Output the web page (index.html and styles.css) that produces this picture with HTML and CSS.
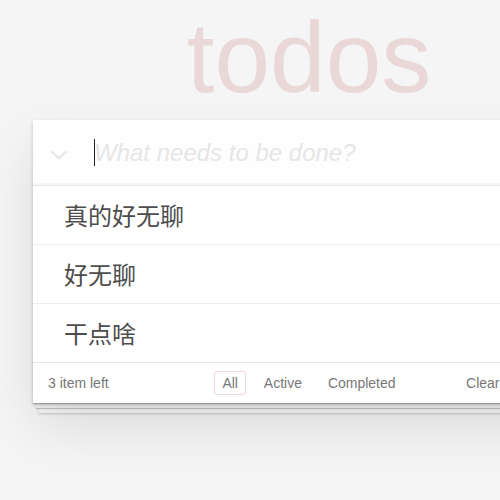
FILE: index.html
```html
<!DOCTYPE html>
<html>
<head>
<meta charset="utf-8">
<link rel="stylesheet" href="styles.css">
</head>
<body>
<div class="page">
  <h1 class="title">todos</h1>
  <section class="todoapp">
    <header class="header">
      <span class="toggle-all">
        <svg width="18" height="10" viewBox="0 0 18 10"><polyline points="1.5,1.5 9,8 16.5,1.5" fill="none" stroke="#e6e6e6" stroke-width="2.2"/></svg>
      </span>
      <div class="new-todo"><span class="caret"></span><span class="placeholder">What needs to be done?</span></div>
    </header>
    <ul class="todo-list">
      <li class="todo">真的好无聊</li>
      <li class="todo">好无聊</li>
      <li class="todo">干点啥</li>
    </ul>
    <footer class="footer">
      <span class="todo-count">3 item left</span>
      <ul class="filters">
        <li><a class="filter selected">All</a></li>
        <li><a class="filter">Active</a></li>
        <li><a class="filter">Completed</a></li>
      </ul>
      <span class="clear">Clear completed</span>
    </footer>
  </section>
</div>
</body>
</html>
```
FILE: styles.css
```css
html, body {
  margin: 0;
  padding: 0;
  overflow: hidden;
}
body {
  background: #f5f5f5;
  font: 14px "Liberation Sans", Arial, "Noto Sans CJK SC", sans-serif;
  color: #4d4d4d;
  width: 500px;
  height: 500px;
}
.page {
  padding-left: 33px;
  width: 550px;
}
.title {
  margin: 0;
  height: 120px;
  font-size: 100px;
  font-weight: 100;
  line-height: 115px;
  text-align: center;
  color: rgba(175, 47, 47, 0.15);
  padding-left: 2px;
}
.todoapp {
  position: relative;
  width: 550px;
  background: #fff;
  box-shadow: 0 2px 4px 0 rgba(0,0,0,0.2), 0 25px 50px 0 rgba(0,0,0,0.1);
}
.header {
  display: flex;
  align-items: center;
  height: 65px;
  background: rgba(0,0,0,0.003);
  box-shadow: inset 0 -2px 1px rgba(0,0,0,0.03);
}
.toggle-all {
  width: 60px;
  display: flex;
  justify-content: center;
  padding-top: 4px;
  box-sizing: border-box;
  padding-right: 8px;
}
.toggle-all svg { display: block; }
.new-todo {
  display: flex;
  align-items: center;
  font-size: 24px;
  font-style: italic;
  line-height: 33px;
}
.caret {
  display: inline-block;
  width: 1px;
  height: 27px;
  background: #222;
  margin-left: 1px;
  margin-right: -1px;
}
.placeholder {
  color: #e6e6e6;
}
.todo-list {
  margin: 0;
  padding: 0;
  list-style: none;
  border-top: 1px solid #e6e6e6;
}
.todo {
  font-family: "Noto Sans CJK SC", sans-serif;
  font-size: 24px;
  line-height: 28px;
  padding: 15px 15px 15px 31px;
  border-bottom: 1px solid #ededed;
  color: #4d4d4d;
}
.todo:last-child {
  border-bottom: none;
}
.footer {
  position: relative;
  display: flex;
  justify-content: space-between;
  align-items: center;
  height: 20px;
  padding: 10px 15px;
  color: #777;
  border-top: 1px solid #e6e6e6;
}
.footer::before {
  content: "";
  position: absolute;
  left: 0;
  right: 0;
  bottom: 0;
  height: 50px;
  overflow: hidden;
  box-shadow: 0 1px 1px rgba(0,0,0,0.2), 0 8px 0 -3px #f6f6f6, 0 9px 1px -3px rgba(0,0,0,0.2), 0 16px 0 -6px #f6f6f6, 0 17px 2px -6px rgba(0,0,0,0.2);
  z-index: -1;
}
.todo-count {
  position: relative;
}
.filters {
  position: absolute;
  left: 0;
  right: 0;
  top: 10px;
  margin: 0;
  padding: 0 0 0 2px;
  list-style: none;
  text-align: center;
  line-height: 20px;
}
.filters li {
  display: inline;
}
.filter {
  margin: 3px;
  padding: 3px 7px;
  border: 1px solid transparent;
  border-radius: 3px;
  color: inherit;
}
.filter.selected {
  border-color: rgba(175, 47, 47, 0.2);
}
.clear {
  position: relative;
}
```
